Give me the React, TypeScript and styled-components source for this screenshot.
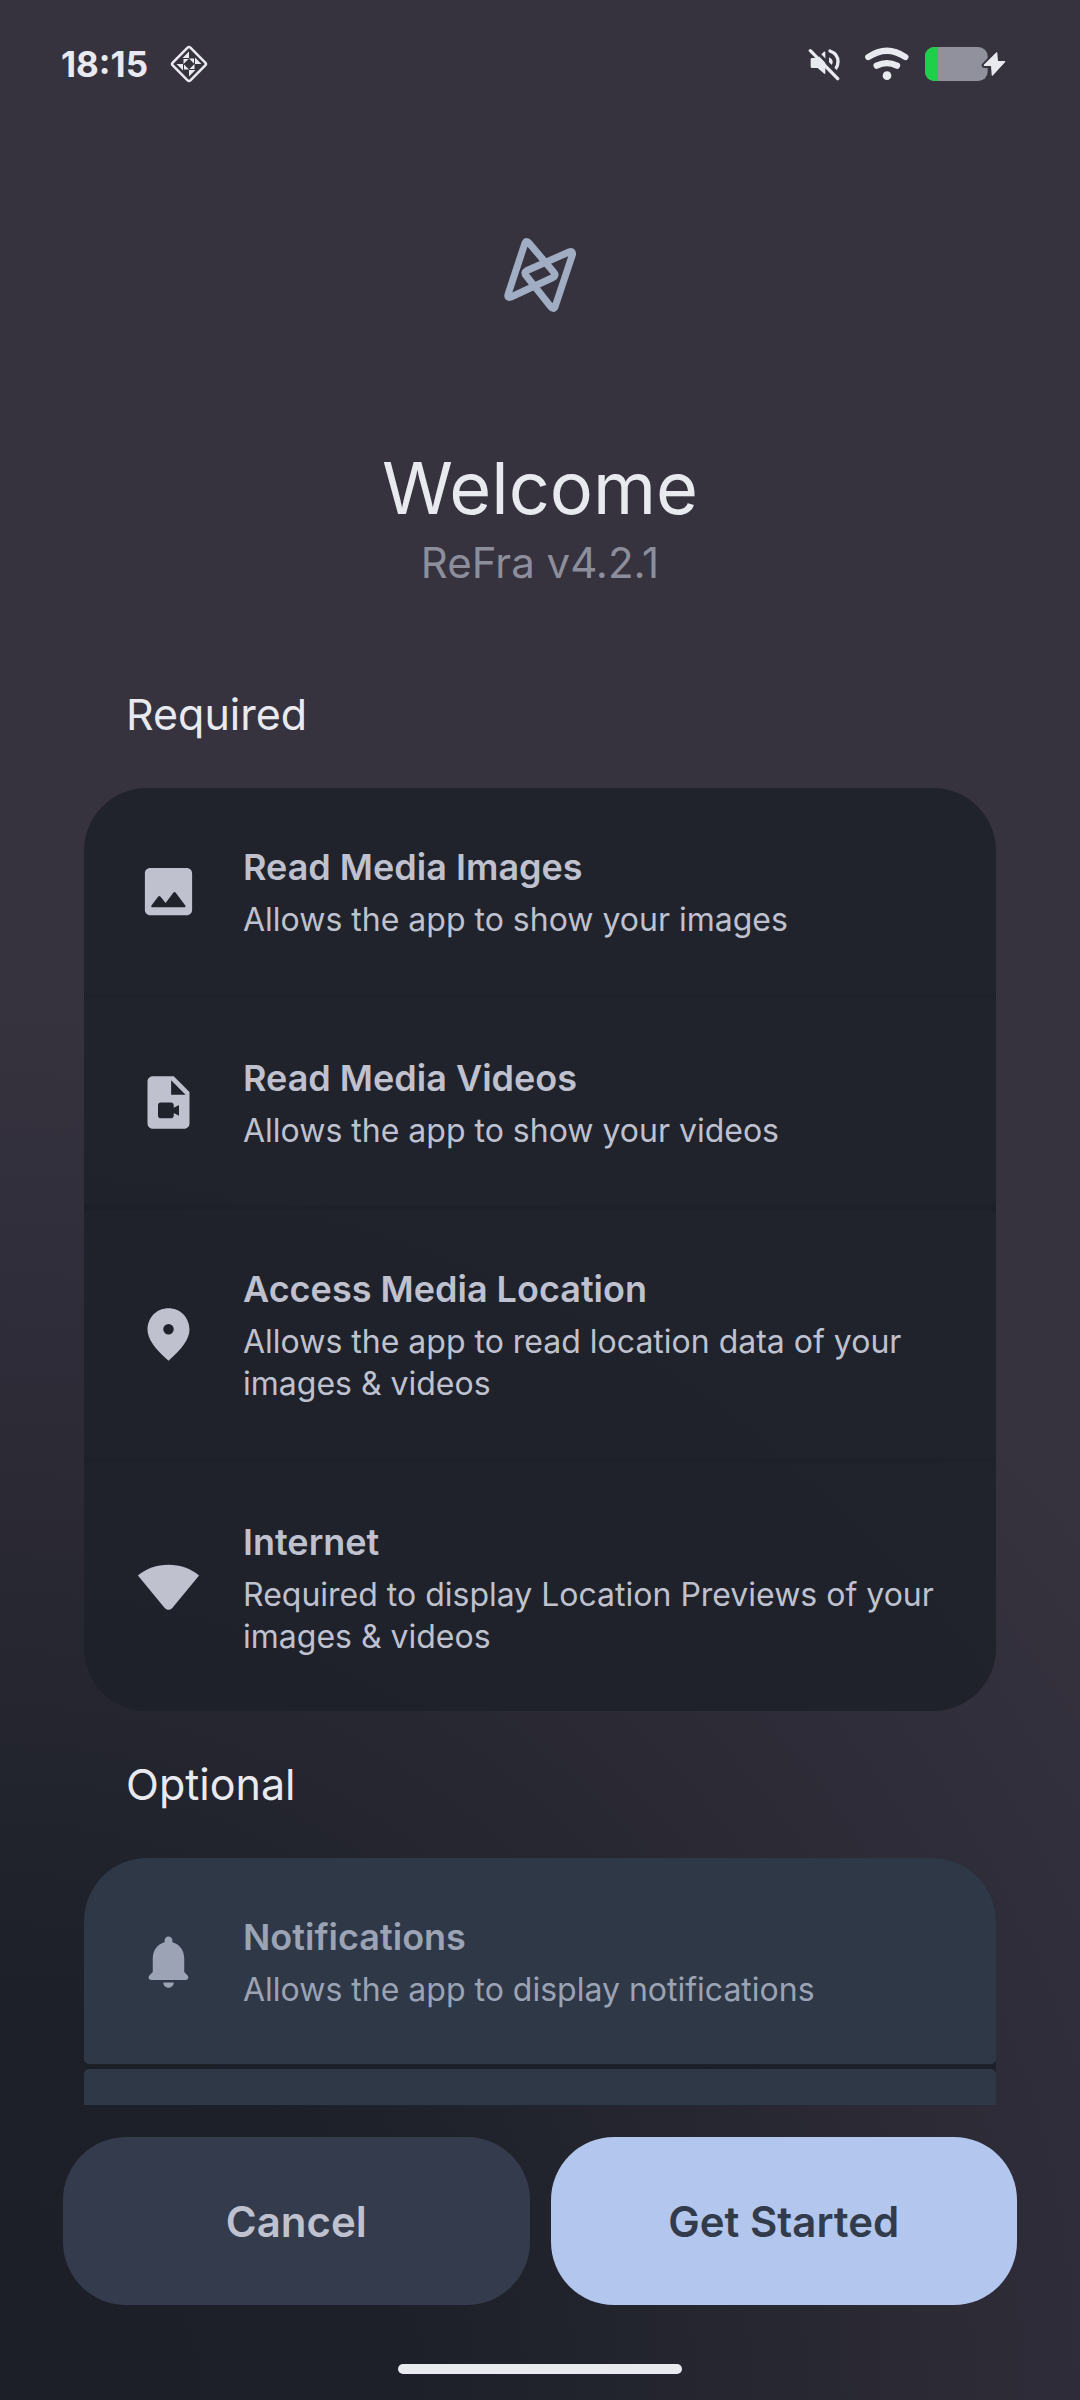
import React from "react";
import styled, { createGlobalStyle, css } from "styled-components";

const colors = {
  text: "#e9e9f0",
  muted: "#8d8e9b",
  rowText: "#bfc1cf",
  optionalText: "#9ba3b5",
  group: "rgba(28, 31, 39, 0.9)",
  requiredRow: "rgba(120, 140, 190, 0.025)",
  optionalRow: "#2f3847",
  cancel: "#333b4c",
  primary: "#b3c6ed",
  onPrimary: "#323b4b",
  backdrop: "#36333f",
  charge: "#1fce49",
};

const GlobalStyle = createGlobalStyle`
  * { box-sizing: border-box; }
  html, body, #root { height: 100%; }
  body {
    margin: 0;
    background: ${colors.backdrop};
    font-family: Inter, Roboto, "Liberation Sans", sans-serif;
    color: ${colors.text};
  }
`;

const Screen = styled.div`
  display: flex;
  flex-direction: column;
  height: 100%;
  background: radial-gradient(
    circle at 0 100%,
    #1c1f27 0,
    #1d2028 400px,
    #22242d 600px,
    #2a2934 900px,
    #302e3a 1150px,
    ${colors.backdrop} 1400px
  );
`;

const StatusBar = styled.header`
  display: flex;
  justify-content: space-between;
  align-items: center;
  flex: none;
  height: 126px;
  padding: 2px 74px 0 61px;
`;

const StatusGroup = styled.div<{ $gap: number }>`
  display: flex;
  align-items: center;
  gap: ${(p) => p.$gap}px;
`;

const Clock = styled.time`
  font-size: 35px;
  line-height: 42px;
  font-weight: 700;
`;

const Content = styled.main`
  flex: 1;
  min-height: 0;
  overflow-y: auto;
  scrollbar-width: none;
  padding: 0 84px;
`;

const Hero = styled.section`
  display: flex;
  flex-direction: column;
  align-items: center;
  padding: 112px 0 50px;
`;

const Title = styled.h1`
  margin: 129px 0 0;
  font-size: 72px;
  line-height: 94px;
  font-weight: 400;
`;

const Version = styled.p`
  margin: 0;
  font-size: 42px;
  line-height: 56px;
  color: ${colors.muted};
`;

const GroupTitle = styled.h2`
  margin: 0;
  padding: 42px;
  font-size: 43px;
  line-height: 63px;
  font-weight: 400;
`;

const Group = styled.ul`
  display: flex;
  flex-direction: column;
  gap: 5px;
  margin: 0;
  padding: 0;
  list-style: none;
  border-radius: 63px;
  overflow: hidden;
  background: ${colors.group};
`;

const rowStyle = css`
  display: flex;
  align-items: center;
  gap: 43px;
  width: 100%;
  min-height: 206px;
  padding: 53px;
  border: 0;
  border-radius: 5px;
  font-family: inherit;
  text-align: left;
`;

const RequiredRow = styled.div`
  ${rowStyle}
  background: ${colors.requiredRow};
  color: ${colors.rowText};
`;

const OptionalRow = styled.button`
  ${rowStyle}
  background: ${colors.optionalRow};
  color: ${colors.optionalText};
`;

const RowIcon = styled.svg`
  flex: none;
  width: 63px;
  height: 63px;
  fill: currentColor;
`;

const RowText = styled.span`
  display: flex;
  flex-direction: column;
  gap: 5px;
  min-width: 0;
`;

const RowTitle = styled.span`
  font-size: 36px;
  line-height: 53px;
  font-weight: 600;
`;

const RowDescription = styled.span`
  font-size: 32px;
  line-height: 42px;
`;

const Footer = styled.footer`
  flex: none;
  display: flex;
  flex-direction: column;
  align-items: center;
  gap: 59px;
  padding: 32px 63px 26px;
`;

const Actions = styled.div`
  display: flex;
  gap: 21px;
  width: 100%;
`;

const ActionButton = styled.button<{ $primary?: boolean }>`
  flex: 1;
  height: 168px;
  border: 0;
  border-radius: 63px;
  font-family: inherit;
  font-size: 42px;
  font-weight: 600;
  background: ${(p) => (p.$primary ? colors.primary : colors.cancel)};
  color: ${(p) => (p.$primary ? colors.onPrimary : colors.rowText)};
`;

const HomeIndicator = styled.div`
  width: 284px;
  height: 10px;
  border-radius: 5px;
  background: ${colors.text};
`;

const icons = {
  image:
    "M19 3H5c-1.100 0-2 .9-2 2v14c0 1.100.9 2 2 2h14c1.100 0 2-.9 2-2V5c0-1.100-.9-2-2-2zM5.900 18c-.4 0-.6-.4-.4-.7l2.600-3.400c.2-.3.600-.3.800 0l2 2.500 3-4c.2-.3.600-.3.800 0l3.700 4.900c.2.3 0 .7-.4.7z",
  video:
    "M14 2H6c-1.100 0-2 .9-2 2v16c0 1.100.9 2 2 2h12c1.100 0 2-.9 2-2V8l-6-6zm-1 7V3.500L18.500 9H13zm1 5 2-1.060v4.120L14 16v1c0 .55-.45 1-1 1H9c-.55 0-1-.45-1-1v-4c0-.55.45-1 1-1h4c.55 0 1 .45 1 1v1z",
  place:
    "M12 2c-4.200 0-8 3.220-8 8.200 0 3.320 2.670 7.250 8 11.800 5.330-4.550 8-8.480 8-11.800C20 5.220 16.200 2 12 2zm0 10a2 2 0 1 1 0-4 2 2 0 0 1 0 4z",
  wifi:
    "M12 3.300C7.500 3.300 3.500 4.800.35 7.400l10.200 12.400c.8.900 2.100.9 2.900 0L23.650 7.400C20.500 4.800 16.500 3.300 12 3.300z",
  bell:
    "M12 22c1.100 0 2-.9 2-2h-4c0 1.100.890 2 2 2zm6-6v-5c0-3.070-1.640-5.640-4.500-6.320V4c0-.83-.67-1.500-1.500-1.500s-1.500.67-1.500 1.500v.68C7.630 5.360 6 7.920 6 11v5l-1.290 1.290c-.63.63-.19 1.710.7 1.710h13.170c.89 0 1.340-1.080.71-1.710L18 16z",
};

type Permission = {
  icon: keyof typeof icons;
  title: string;
  description: string;
};

const required: Permission[] = [
  { icon: "image", title: "Read Media Images", description: "Allows the app to show your images" },
  { icon: "video", title: "Read Media Videos", description: "Allows the app to show your videos" },
  {
    icon: "place",
    title: "Access Media Location",
    description: "Allows the app to read location data of your images & videos",
  },
  {
    icon: "wifi",
    title: "Internet",
    description: "Required to display Location Previews of your images & videos",
  },
];

function PermissionContent({ icon, title, description }: Permission) {
  return (
    <>
      <RowIcon viewBox="0 0 24 24" aria-hidden="true">
        <path fillRule="evenodd" d={icons[icon]} />
      </RowIcon>
      <RowText>
        <RowTitle>{title}</RowTitle>
        <RowDescription>{description}</RowDescription>
      </RowText>
    </>
  );
}

function DiamondIcon() {
  return (
    <svg width="38" height="38" viewBox="0 0 38 38" aria-hidden="true">
      <rect
        x="6.500"
        y="6.500"
        width="25"
        height="25"
        rx="2"
        transform="rotate(45 19 19)"
        fill="none"
        stroke={colors.text}
        strokeWidth="2.500"
      />
      <g fill={colors.text}>
        {[0, 90, 180, 270].map((angle) => (
          <g key={angle} transform={`rotate(${angle} 19 19)`}>
            <path d="M19 6.500v6.500h-6.500z" />
            <path d="M13.500 14h5l-5 5z" />
          </g>
        ))}
      </g>
    </svg>
  );
}

function MutedIcon() {
  return (
    <svg width="33" height="33" viewBox="85 90 99 99" aria-hidden="true">
      <path
        d="M97 120h17l18-18q5-4 5 2v60q0 7-5 2l-18-16H97q-4 0-4-4v-22q0-4 4-4z"
        fill={colors.text}
      />
      <path d="M148 118q11 5 11 14t-11 12z" fill={colors.text} />
      <path
        d="M151 99q24 9 24 32 0 12-7 21"
        fill="none"
        stroke={colors.text}
        strokeWidth="10"
        strokeLinecap="round"
      />
      <path d="M100 90l84 86" stroke={colors.backdrop} strokeWidth="9" />
      <path d="M92 98l82 84" stroke={colors.text} strokeWidth="10" strokeLinecap="round" />
    </svg>
  );
}

function WifiIcon() {
  return (
    <svg width="44" height="34" viewBox="257 82 132 102" aria-hidden="true">
      <g fill="none" stroke={colors.text} strokeWidth="19" strokeLinecap="round">
        <path d="M267 112q56-38 111 0" />
        <path d="M292 138q31-15 61 0" />
      </g>
      <circle cx="323" cy="168" r="13" fill={colors.text} />
    </svg>
  );
}

function BatteryIcon() {
  return (
    <svg width="81" height="34" viewBox="435 81 243 102" aria-hidden="true">
      <rect x="435" y="81" width="188" height="102" rx="28" fill="#90919c" />
      <path d="M474 81h-11a28 28 0 0 0-28 28v46a28 28 0 0 0 28 28h11z" fill={colors.charge} />
      <path
        d="M650 99l-37 37h22l2 29 37-40h-22z"
        fill={colors.text}
        stroke={colors.backdrop}
        strokeWidth="16"
        strokeLinejoin="round"
        paintOrder="stroke"
      />
      <path
        d="M650 99l-37 37h22l2 29 37-40h-22z"
        fill={colors.text}
        stroke={colors.text}
        strokeWidth="4"
        strokeLinejoin="round"
      />
    </svg>
  );
}

function Logo() {
  return (
    <svg width="74" height="74" viewBox="23 28.500 74 74" aria-hidden="true">
      <g fill="none" stroke="#a0adc3" strokeWidth="7" strokeLinejoin="round">
        <path d="M45 33.500q1.500-3 4 0L74 63q2.500 3-1 5L31 87.500q-4 1.500-3-2.500z" />
        <path d="M75 97.500q-1.500 3-4 0L46 66q-2.500-3 1-5l42-18.500q4-1.500 3.500 2.500z" />
      </g>
    </svg>
  );
}

export default function App() {
  return (
    <>
      <GlobalStyle />
      <Screen>
        <StatusBar>
          <StatusGroup $gap={22}>
            <Clock>18:15</Clock>
            <DiamondIcon />
          </StatusGroup>
          <StatusGroup $gap={16}>
            <StatusGroup $gap={24}>
              <MutedIcon />
              <WifiIcon />
            </StatusGroup>
            <BatteryIcon />
          </StatusGroup>
        </StatusBar>
        <Content>
          <Hero>
            <Logo />
            <Title>Welcome</Title>
            <Version>ReFra v4.2.1</Version>
          </Hero>
          <GroupTitle>Required</GroupTitle>
          <Group>
            {required.map((permission) => (
              <li key={permission.title}>
                <RequiredRow>
                  <PermissionContent {...permission} />
                </RequiredRow>
              </li>
            ))}
          </Group>
          <GroupTitle>Optional</GroupTitle>
          <Group>
            <li>
              <OptionalRow type="button">
                <PermissionContent
                  icon="bell"
                  title="Notifications"
                  description="Allows the app to display notifications"
                />
              </OptionalRow>
            </li>
            <li>
              <OptionalRow as="div" />
            </li>
          </Group>
        </Content>
        <Footer>
          <Actions>
            <ActionButton type="button">Cancel</ActionButton>
            <ActionButton type="button" $primary>
              Get Started
            </ActionButton>
          </Actions>
          <HomeIndicator />
        </Footer>
      </Screen>
    </>
  );
}
